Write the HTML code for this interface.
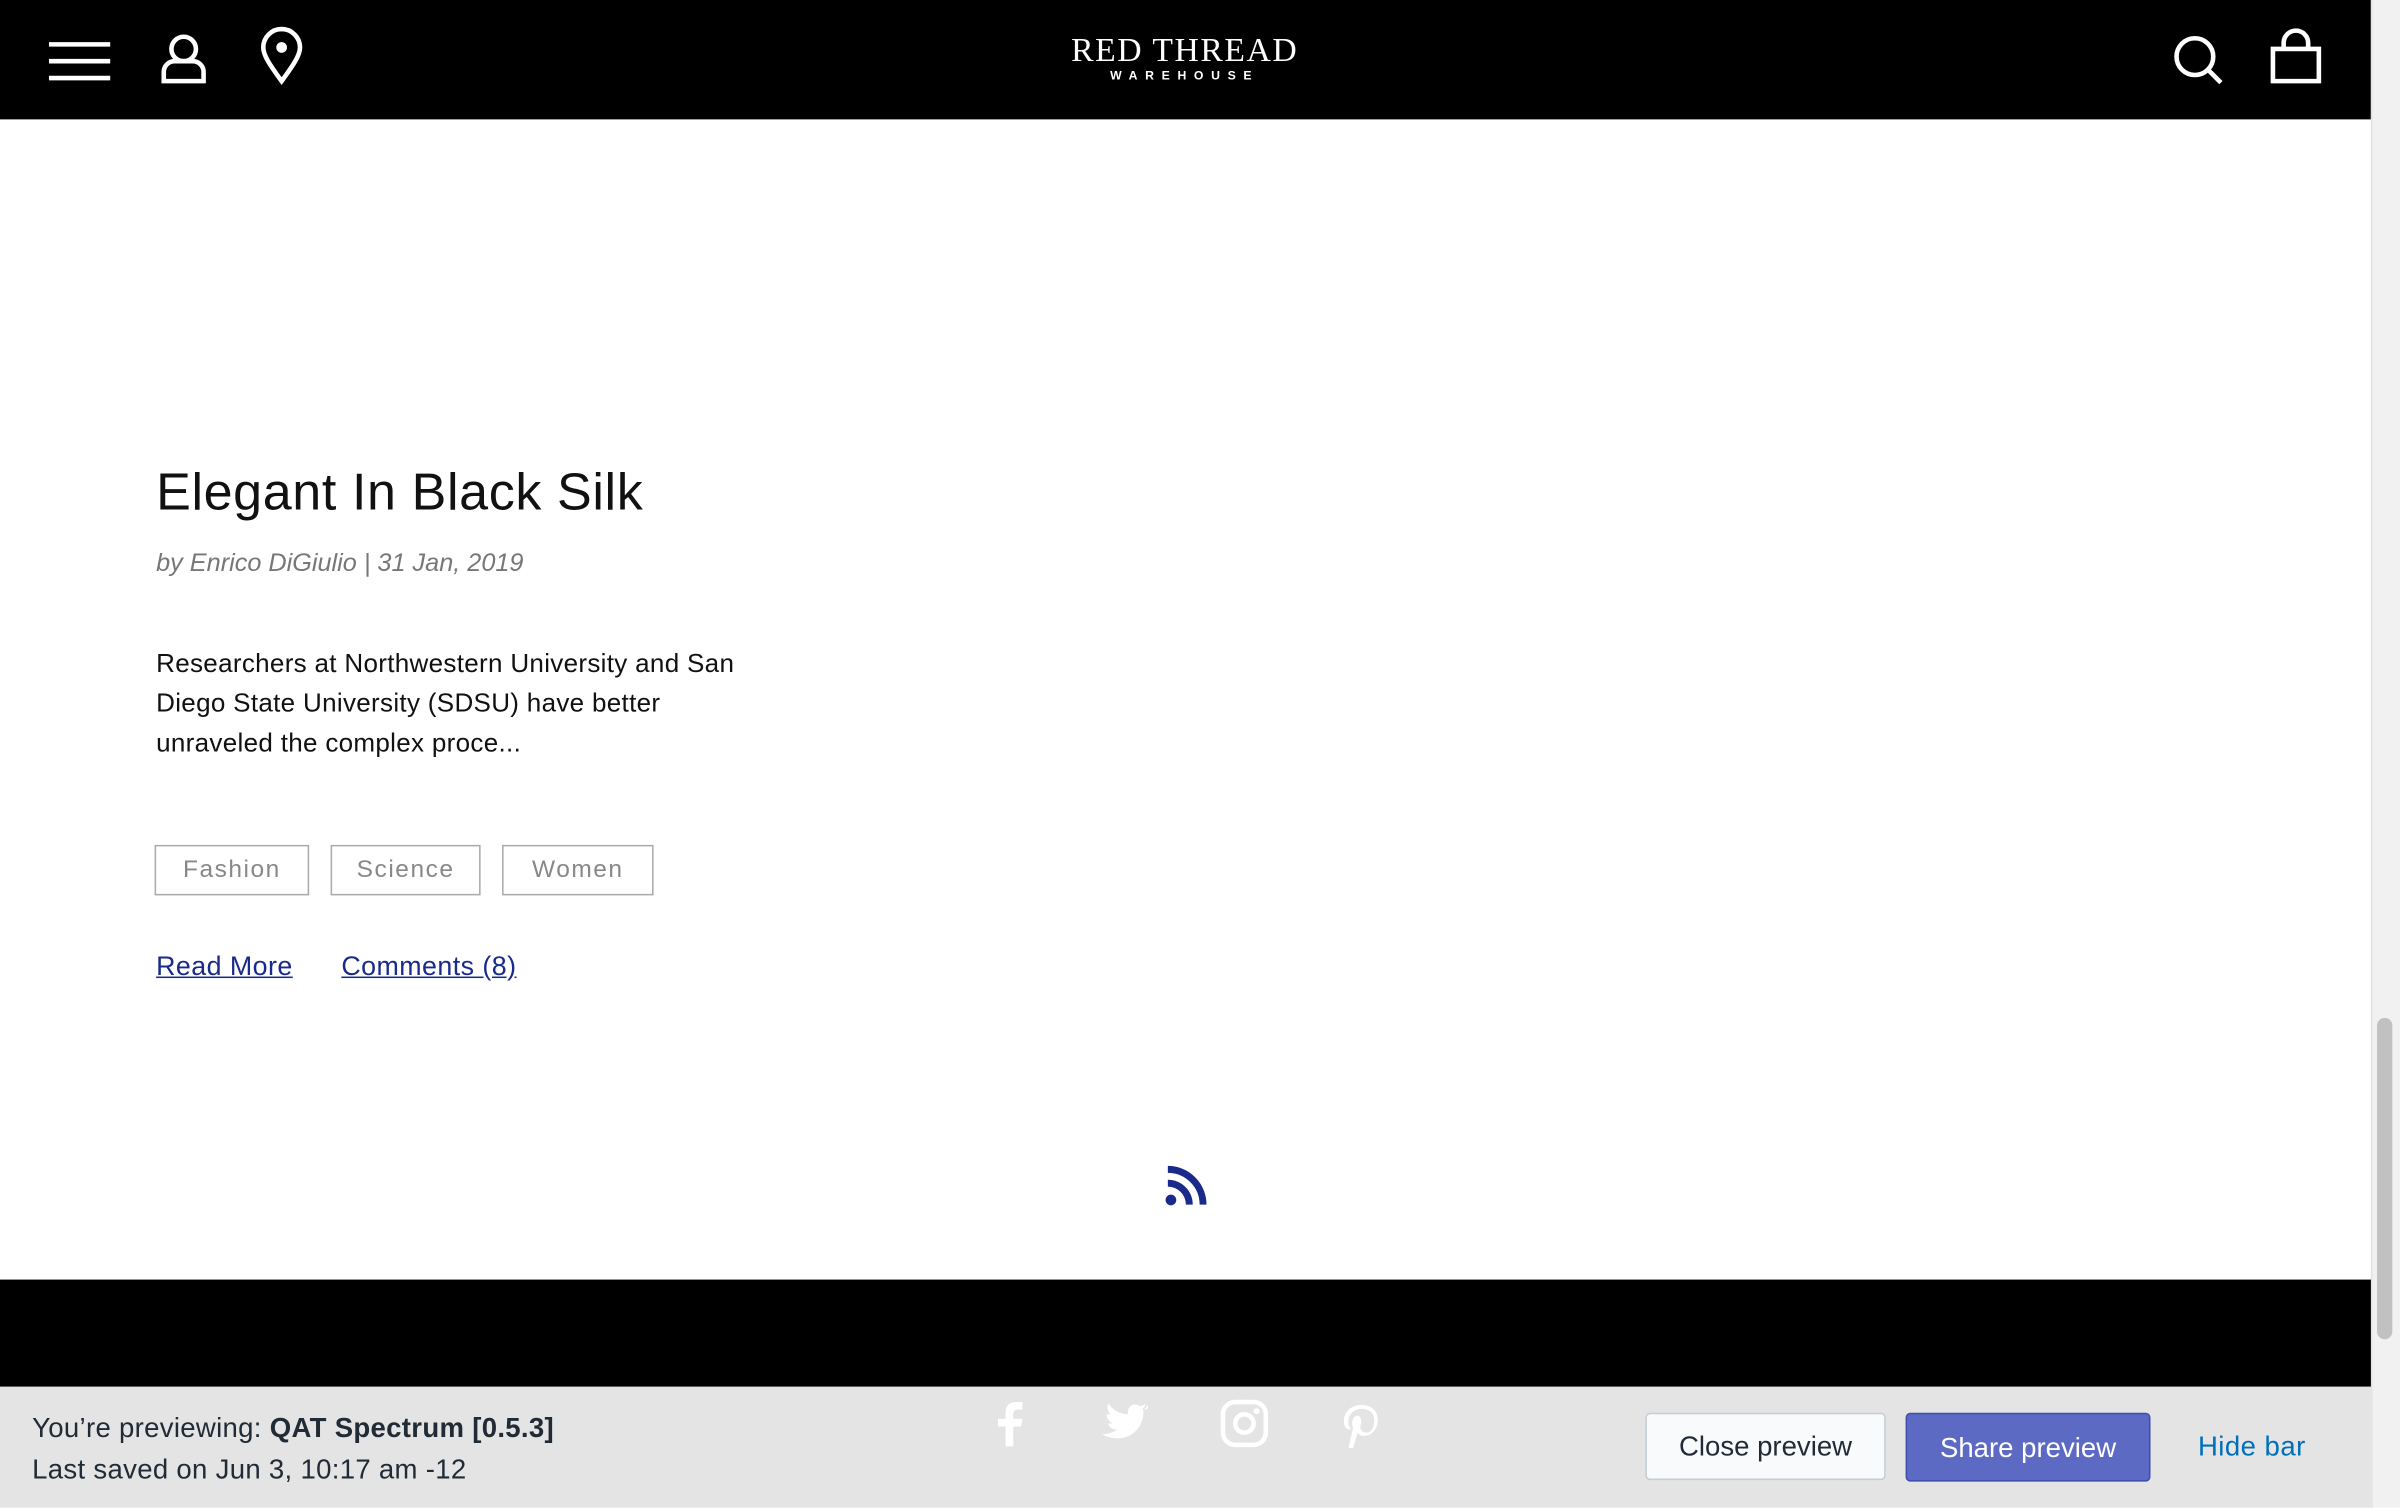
<!DOCTYPE html>
<html><head><meta charset="utf-8"><style>
html,body{margin:0;padding:0;width:2400px;height:1508px;overflow:hidden;background:#fff}
#w{position:absolute;left:0;top:0;width:1568px;height:985px;transform:scale(1.5306);transform-origin:0 0;font-family:"Liberation Sans",sans-serif}
.a{position:absolute}
</style></head><body><div id="w">
<div class="a" style="left:0;top:0;width:1549px;height:78px;background:#000"></div>
<div class="a" style="left:1549px;top:0;width:19px;height:985px;background:#f1f1f1;border-left:1px solid #e2e2e2"></div>
<div class="a" style="left:1553px;top:665px;width:10px;height:210px;background:#c1c1c1;border-radius:5px"></div>
<svg class="a" style="left:0;top:0" width="1549" height="78" fill="none" stroke="#fff" stroke-width="3">
<path d="M32 29H72M32 40H72M32 51H72"/>
<circle cx="120" cy="32" r="8"/><path d="M107 53V47a7 7 0 0 1 7-7h12a7 7 0 0 1 7 7v6z"/>
<path d="M184 53C176 42 172 36 172 31a12 12 0 0 1 24 0c0 5-4 11-12 22z"/><circle cx="184" cy="31" r="3.5" fill="#fff" stroke="none"/>
<circle cx="1434" cy="37" r="12"/><path d="M1443 46L1451 54"/>
<path d="M1485 32H1515V53H1485z"/><path d="M1492 32v-4a8 8 0 0 1 16 0v4"/>
</svg>
<div class="a" style="left:674px;top:20px;width:200px;text-align:center;color:#fff;font-family:'Liberation Serif',serif;font-size:22px;letter-spacing:1px">RED THREAD</div>
<div class="a" style="left:674px;top:45px;width:200px;text-align:center;color:#fff;font-size:8px;font-weight:bold;letter-spacing:5px">WAREHOUSE</div>
<div class="a" style="left:102px;top:303px;font-size:34px;color:#111;letter-spacing:0.4px">Elegant In Black Silk</div>
<div class="a" style="left:102px;top:359px;font-size:16.5px;color:#777;font-style:italic">by Enrico DiGiulio | 31 Jan, 2019</div>
<div class="a" style="left:102px;top:421px;width:408px;font-size:17px;line-height:26px;color:#111;letter-spacing:0.2px">Researchers at Northwestern University and San Diego State University (SDSU) have better unraveled the complex proce...</div>
<div class="a" style="left:101px;top:552px;width:99px;height:31px;border:1px solid #aaa;color:#888;font-size:16px;line-height:31px;text-align:center;letter-spacing:1px">Fashion</div>
<div class="a" style="left:216px;top:552px;width:96px;height:31px;border:1px solid #aaa;color:#888;font-size:16px;line-height:31px;text-align:center;letter-spacing:1px">Science</div>
<div class="a" style="left:328px;top:552px;width:97px;height:31px;border:1px solid #aaa;color:#888;font-size:16px;line-height:31px;text-align:center;letter-spacing:1px">Women</div>
<div class="a" style="left:102px;top:621px;font-size:17.5px;color:#1a2a8a;text-decoration:underline;letter-spacing:0.3px">Read More</div>
<div class="a" style="left:223px;top:621px;font-size:17.5px;color:#1a2a8a;text-decoration:underline;letter-spacing:0.3px">Comments (8)</div>
<svg class="a" style="left:760px;top:761px" width="30" height="30" fill="none" stroke="#1a2a8a" stroke-width="4.5"><circle cx="5" cy="23" r="3.5" fill="#1a2a8a" stroke="none"/><path d="M3 12a14 14 0 0 1 14 14"/><path d="M3 3a23 23 0 0 1 23 23"/></svg>
<div class="a" style="left:0;top:836px;width:1549px;height:70px;background:#000"></div>
<div class="a" style="left:0;top:906px;width:1549px;height:79px;background:#e4e4e4"></div>
<svg class="a" style="left:640px;top:910px" width="280" height="40" fill="#fff">
<path d="M17 35V22h-5v-5h5v-4c0-5 3-7 7-7h4v5h-3c-2 0-3 1-3 3v3h6l-1 5h-5v13z"/>
<path d="M110 10c-1 1-3 1-4 1 1-1 2-2 3-4-1 1-3 1-4 2-3-3-9-1-8 5-6 0-10-3-13-7-1 3 0 6 2 7h-3c0 3 2 5 4 6h-3c1 3 3 4 6 4-3 2-6 3-10 3 12 7 28 0 27-16 2-1 2-2 3-3z"/>
<rect x="159" y="6" width="28" height="28" rx="8" fill="none" stroke="#fff" stroke-width="3"/><circle cx="173" cy="20" r="6" fill="none" stroke="#fff" stroke-width="3"/><circle cx="181" cy="12" r="2"/>
<path d="M241 36l3-13c-1-2-1-7 2-8 3-1 4 3 3 6-1 3 1 5 4 5 5 0 7-11 2-14-6-4-15 0-14 8 0 2 2 3 1 4-4 0-5-6-3-10 4-9 20-8 21 2 1 7-4 13-10 12-2 0-3-2-3-2l-3 10z"/>
</svg>
<div class="a" style="left:21px;top:920px;font-size:18px;line-height:27px;color:#212b36;letter-spacing:0.2px">You’re previewing: <b>QAT Spectrum [0.5.3]</b><br>Last saved on Jun 3, 10:17 am -12</div>
<div class="a" style="left:1075px;top:923px;width:157px;height:44px;background:#f9fafb;border:1px solid #c4cdd5;border-radius:3px;box-sizing:border-box;font-size:18px;line-height:43px;text-align:center;color:#212b36">Close preview</div>
<div class="a" style="left:1245px;top:923px;width:160px;height:45px;background:#5c6ac4;border:1px solid #3f4eae;border-radius:3px;box-sizing:border-box;font-size:18px;line-height:44px;text-align:center;color:#fff">Share preview</div>
<div class="a" style="left:1436px;top:935px;font-size:18px;color:#006fbb;letter-spacing:0.3px">Hide bar</div>
</div></body></html>
